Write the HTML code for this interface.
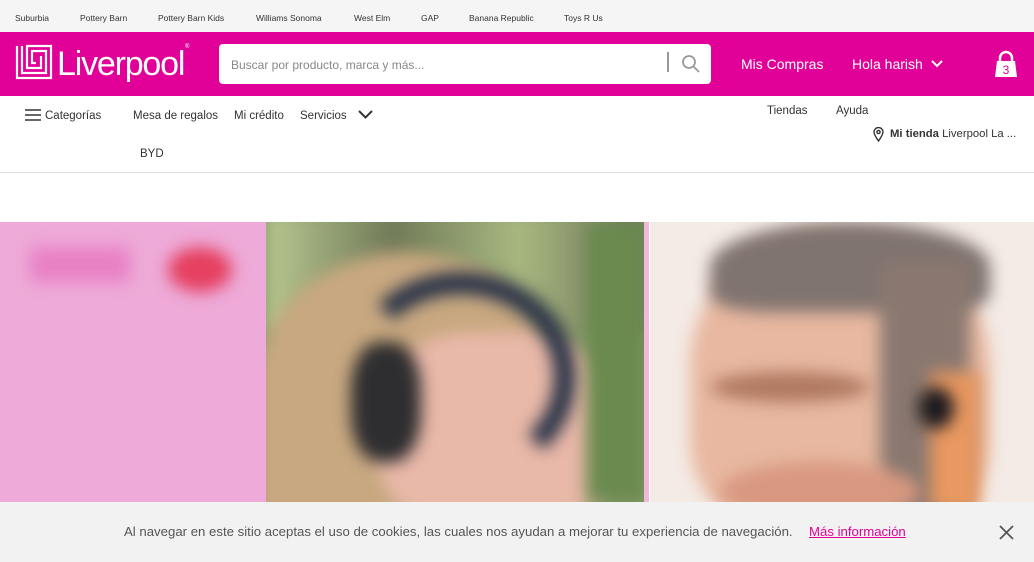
<!DOCTYPE html>
<html><head><meta charset="utf-8"><style>
*{margin:0;padding:0;box-sizing:border-box}
body{width:1034px;height:562px;overflow:hidden;font-family:"Liberation Sans",sans-serif;background:#fff;position:relative}
.top{height:32px;background:#f5f5f5;font-size:8.5px;color:#333;position:relative}
.top span{position:absolute;top:13px}
.hdr{position:absolute;top:32px;left:0;width:1034px;height:64px;background:#e10098;color:#fff}
.a{position:absolute;white-space:nowrap}
.nav{font-size:11.5px;color:#333}
.hero{position:absolute;top:222px;height:280px;overflow:hidden}
.b{position:absolute;filter:blur(8px)}
</style></head><body>
<div class="top">
<span style="left:15px">Suburbia</span><span style="left:80px">Pottery Barn</span><span style="left:158px">Pottery Barn Kids</span><span style="left:256px">Williams Sonoma</span><span style="left:354px">West Elm</span><span style="left:421px">GAP</span><span style="left:469px">Banana Republic</span><span style="left:564px">Toys R Us</span>
</div>
<div class="hdr">
<svg class="a" style="left:15px;top:12px" width="38" height="36" viewBox="0 0 38 36" fill="none" stroke="#fff" stroke-width="2.2">
<path d="M2 2v32h34V2H12v22h14V12"/><path d="M7 2v27h24V7H17v12h4"/></svg>
<div class="a" style="left:57px;top:12px;font-size:34px;letter-spacing:-1.2px;line-height:40px">Liverpool</div>
<div class="a" style="left:185px;top:12px;font-size:6px">®</div>
<div class="a" style="left:219px;top:12px;width:492px;height:40px;background:#fff;border-radius:4px">
<div class="a" style="left:12px;top:14px;font-size:12px;color:#888">Buscar por producto, marca y más...</div>
<div class="a" style="left:448px;top:8px;width:2px;height:20px;background:#999"></div>
<svg class="a" style="left:462px;top:10px" width="20" height="20" viewBox="0 0 20 20" fill="none" stroke="#999" stroke-width="1.8"><circle cx="8" cy="8" r="6"/><path d="M12.5 12.5L18 18"/></svg>
</div>
<div class="a" style="left:741px;top:24px;font-size:14px">Mis Compras</div>
<div class="a" style="left:852px;top:24px;font-size:14px">Hola harish</div>
<svg class="a" style="left:931px;top:27px" width="12" height="10" viewBox="0 0 12 10" fill="none" stroke="#fff" stroke-width="2"><path d="M1 2l5 5 5-5"/></svg>
<svg class="a" style="left:994px;top:18px" width="24" height="28" viewBox="0 0 24 28"><path d="M6 12V8a6 6 0 0 1 12 0v4" fill="none" stroke="#fff" stroke-width="2.5"/><path d="M3 11h18l2 16H1z" fill="#fff"/><text x="12" y="24" font-size="12" text-anchor="middle" fill="#e10098" font-family="Liberation Sans">3</text></svg>
</div>
<div class="nav">
<svg class="a" style="left:25px;top:109px" width="16" height="12" viewBox="0 0 16 12" stroke="#333" stroke-width="1.6"><path d="M0 1h16M0 6h16M0 11h16"/></svg>
<div class="a" style="left:45px;top:110px">Categorías</div>
<div class="a" style="left:133px;top:110px">Mesa de regalos</div>
<div class="a" style="left:234px;top:110px">Mi crédito</div>
<div class="a" style="left:300px;top:110px">Servicios</div>
<svg class="a" style="left:358px;top:109px" width="15" height="11" viewBox="0 0 15 11" fill="none" stroke="#333" stroke-width="2"><path d="M1 2l6.5 6.5L14 2"/></svg>
<div class="a" style="left:140px;top:148px">BYD</div>
<div class="a" style="left:767px;top:105px">Tiendas</div>
<div class="a" style="left:836px;top:105px">Ayuda</div>
<svg class="a" style="left:873px;top:127px" width="11" height="15" viewBox="0 0 11 15" fill="none" stroke="#333" stroke-width="1.4"><path d="M5.5 14C2 9 1 7 1 5a4.5 4.5 0 0 1 9 0c0 2-1 4-4.5 9z"/><circle cx="5.5" cy="5" r="1.6"/></svg>
<div class="a" style="left:890px;top:128px;font-size:11.3px"><b>Mi tienda</b> Liverpool La ...</div>
</div>
<div class="a" style="left:0;top:172px;width:1034px;height:1px;background:#ddd"></div>
<div class="hero" style="left:0;width:268px;background:#eeaad8">
<div class="b" style="left:30px;top:25px;width:100px;height:35px;background:#e880c4;border-radius:6px"></div>
<div class="b" style="left:168px;top:25px;width:64px;height:45px;background:#e54060;border-radius:50%"></div>
</div>
<div class="hero" style="left:266px;width:380px;background:#8a9a6a">
<div class="b" style="left:0;top:-10px;width:380px;height:120px;background:linear-gradient(90deg,#b8c890,#707a58,#a8b880,#6a7055)"></div>
<div class="b" style="left:-10px;top:30px;width:300px;height:270px;background:#c8a880;border-radius:50% 50% 0 0"></div>
<div class="b" style="left:110px;top:110px;width:240px;height:200px;background:#e8b8a8;border-radius:40%"></div>
<div class="b" style="left:80px;top:50px;width:230px;height:210px;border:22px solid #2a3448;border-color:#2a3448 #2a3448 transparent transparent;border-radius:50%"></div>
<div class="b" style="left:85px;top:120px;width:70px;height:120px;background:#2e2e30;border-radius:40%"></div>
<div class="b" style="left:320px;top:0;width:60px;height:280px;background:#6a8a50"></div>
</div>
<div class="a" style="left:644px;top:222px;width:5px;height:280px;background:#f2b8dc"></div>
<div class="hero" style="left:650px;width:384px;background:#f4ebe6">
<div class="b" style="left:40px;top:10px;width:300px;height:300px;background:#e8b8a0;border-radius:45% 45% 30% 30%"></div>
<div class="b" style="left:60px;top:0;width:280px;height:90px;background:#807470;border-radius:50% 50% 20% 20%"></div>
<div class="b" style="left:230px;top:40px;width:90px;height:260px;background:#8a7870"></div>
<div class="b" style="left:280px;top:150px;width:50px;height:140px;background:#e89860"></div>
<div class="b" style="left:268px;top:165px;width:36px;height:42px;background:#1a1a1e;border-radius:50%"></div>
<div class="b" style="left:60px;top:150px;width:160px;height:30px;background:#b07860;border-radius:50%"></div>
<div class="b" style="left:70px;top:240px;width:200px;height:60px;background:#d89880;border-radius:50%"></div>
</div>
<div class="a" style="left:0;top:502px;width:1034px;height:60px;background:#f2f2f2">
<div class="a" style="left:124px;top:22px;font-size:13.2px;color:#555">Al navegar en este sitio aceptas el uso de cookies, las cuales nos ayudan a mejorar tu experiencia de navegación.</div>
<div class="a" style="left:809px;top:22px;font-size:13.2px;color:#e10098;text-decoration:underline">Más información</div>
<svg class="a" style="left:999px;top:23px" width="15" height="15" viewBox="0 0 15 15" stroke="#555" stroke-width="1.8"><path d="M1 1l13 13M14 1L1 14"/></svg>
</div>
</body></html>
